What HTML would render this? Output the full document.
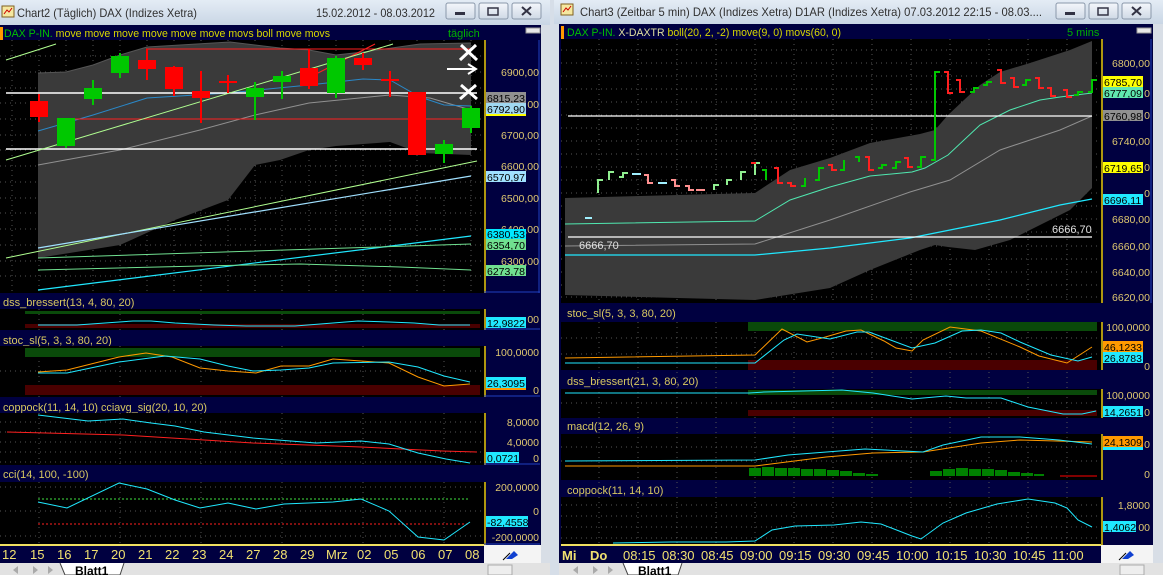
<!DOCTYPE html>
<html><head><meta charset="utf-8"><style>
html,body{margin:0;padding:0;background:#d6dee8;overflow:hidden}
svg{display:block;font-family:"Liberation Sans",sans-serif}
</style></head><body>
<svg width="1163" height="575" viewBox="0 0 1163 575" xmlns="http://www.w3.org/2000/svg">
<defs>
<linearGradient id="tb" x1="0" y1="0" x2="0" y2="1"><stop offset="0" stop-color="#e4ecf5"/><stop offset="1" stop-color="#c9d6e5"/></linearGradient>
<linearGradient id="bt" x1="0" y1="0" x2="0" y2="1"><stop offset="0" stop-color="#f4f7fb"/><stop offset="1" stop-color="#cfd9e6"/></linearGradient>
</defs>
<rect width="1163" height="575" fill="#d6dee8"/>
<!-- ================= LEFT WINDOW ================= -->
<rect x="0" y="0" width="550" height="25" fill="url(#tb)"/>
<rect x="2" y="6" width="12" height="11" fill="#f5e8a0" stroke="#806020"/><path d="M4 14 l3-4 2 2 3-4" stroke="#c00" fill="none"/>
<text x="17" y="17" font-size="12" fill="#303030" textLength="180" lengthAdjust="spacingAndGlyphs">Chart2 (Täglich)  DAX (Indizes Xetra)</text>
<text x="316" y="17" font-size="12" fill="#303030" textLength="119" lengthAdjust="spacingAndGlyphs">15.02.2012 - 08.03.2012</text>
<g stroke="#8a98aa" fill="url(#bt)"><rect x="446" y="3" width="29" height="16" rx="2"/><rect x="479" y="3" width="29" height="16" rx="2"/><rect x="512" y="3" width="29" height="16" rx="2"/></g>
<rect x="455" y="12" width="10" height="3" fill="#334"/><rect x="488" y="8" width="10" height="7" fill="none" stroke="#334" stroke-width="1.5"/>
<path d="M522 7 l9 8 M531 7 l-9 8" stroke="#334" stroke-width="2"/>
<rect x="0" y="25" width="541" height="538" fill="#000040"/>
<rect x="541" y="25" width="9" height="538" fill="#d8dee6"/>
<rect x="526" y="28" width="14" height="5" fill="#e8e8e8" stroke="#999"/>
<rect x="0" y="27" width="3" height="13" fill="#ff9900"/>
<text x="4" y="37" font-size="11" textLength="326" lengthAdjust="spacingAndGlyphs"><tspan fill="#00c000">DAX P-IN.</tspan><tspan fill="#d8d800"> move move move move move move movs boll move movs</tspan></text>
<text x="448" y="37" font-size="11" fill="#00b000">täglich</text>
<!-- main plot -->
<rect x="0" y="40" width="484" height="253" fill="#000"/>
<g stroke="#555" stroke-dasharray="1,4">
<path d="M12 40V293M39 40V293M66 40V293M93 40V293M120 40V293M147 40V293M174 40V293M201 40V293M228 40V293M255 40V293M282 40V293M309 40V293M336 40V293M363 40V293M390 40V293M417 40V293M444 40V293M471 40V293"/>
<path d="M0 56H484M0 72H484M0 88H484M0 103H484M0 119H484M0 135H484M0 150H484M0 166H484M0 182H484M0 198H484M0 213H484M0 229H484M0 245H484M0 261H484M0 276H484"/>
</g>
<polygon fill="#3a3a3a" points="38,73 66,72 93,65 120,55 147,47 230,42 280,48 309,50 336,55 363,52 420,44 471,43 471,155 420,153 390,142 336,146 309,150 280,160 255,165 228,200 175,220 120,245 38,258"/>
<polyline fill="none" stroke="#909090" points="38,165 120,150 200,130 255,115 309,103 390,95 430,98 471,110"/>
<polyline fill="none" stroke="#555" points="38,73 66,72 93,65 120,55 147,47 230,42 280,48 309,50 336,55 363,52 420,44 471,43"/>
<polyline fill="none" stroke="#2a88c8" points="38,131 93,115 147,98 228,93 309,85 363,79 390,80 420,97 444,105 471,106"/>
<path d="M6 93H477M6 149H477" stroke="#fff" stroke-width="1.5"/>
<path d="M146 49H470M66 119H470" stroke="#ff2020"/>
<path d="M318 73L375 44" stroke="#ff2020"/>
<path d="M6 160L393 44M6 258L477 161M6 60L56 44" stroke="#b0ff90"/>
<path d="M38 248L471 176" stroke="#a0e0ff" stroke-width="1.2"/>
<path d="M38 290L471 236" stroke="#20e8ff" stroke-width="1.2"/>
<path d="M38 258L471 244M38 270L200 266 300 264 400 267 471 270" stroke="#70e090" fill="none"/>
<path d="M461 45l16 15M476 45l-16 15M461 85l16 14M476 85l-16 14" stroke="#fff" stroke-width="3"/>
<path d="M447 69H476M468 64l8 5-8 5" stroke="#fff" stroke-width="2" fill="none"/>
<!-- candles -->
<g>
<g fill="#ff0000"><rect x="38" y="94" width="2" height="28"/><rect x="30" y="101" width="18" height="16"/>
<rect x="146" y="49" width="2" height="31"/><rect x="138" y="60" width="18" height="9"/>
<rect x="173" y="66" width="2" height="30"/><rect x="165" y="67" width="18" height="22"/>
<rect x="200" y="71" width="2" height="52"/><rect x="192" y="91" width="18" height="7"/>
<rect x="227" y="75" width="2" height="18"/><rect x="219" y="81" width="18" height="2"/>
<rect x="308" y="49" width="2" height="40"/><rect x="300" y="68" width="18" height="18"/>
<rect x="362" y="53" width="2" height="17"/><rect x="354" y="58" width="18" height="7"/>
<rect x="389" y="71" width="2" height="26"/><rect x="381" y="79" width="18" height="2"/>
<rect x="408" y="92" width="18" height="63"/></g>
<g fill="#00c800"><rect x="65" y="118" width="2" height="30"/><rect x="57" y="118" width="18" height="28"/>
<rect x="92" y="80" width="2" height="25"/><rect x="84" y="88" width="18" height="11"/>
<rect x="119" y="53" width="2" height="25"/><rect x="111" y="56" width="18" height="17"/>
<rect x="254" y="82" width="2" height="38"/><rect x="246" y="88" width="18" height="9"/>
<rect x="281" y="71" width="2" height="28"/><rect x="273" y="76" width="18" height="6"/>
<rect x="335" y="56" width="2" height="42"/><rect x="327" y="58" width="18" height="35"/>
<rect x="443" y="140" width="2" height="23"/><rect x="435" y="144" width="18" height="10"/>
<rect x="470" y="106" width="2" height="27"/><rect x="462" y="108" width="18" height="20"/></g>
</g>
<!-- left axis -->
<rect x="484" y="40" width="56" height="253" fill="#000040"/>
<path d="M485 40V293" stroke="#e8c800" stroke-width="1.5"/><path d="M484 292H540M539 40V293" stroke="#2040c0"/>
<g font-size="10.5" fill="#e0c870" text-anchor="end">
<text x="539" y="76">6900,00</text><text x="539" y="139">6700,00</text><text x="539" y="108">00</text><text x="539" y="170">6600,00</text><text x="539" y="202">6500,00</text><text x="539" y="233">6400,00</text><text x="539" y="265">6300,00</text></g>
<g font-size="10.5" fill="#000">
<rect x="486" y="92" width="40" height="11" fill="#909090"/><text x="487" y="102">6815,23</text>
<rect x="486" y="103" width="40" height="11" fill="#a0d8f0"/><text x="487" y="113">6792,90</text><rect x="486" y="114" width="40" height="2" fill="#ffff00"/>
<rect x="486" y="171" width="40" height="11" fill="#a0e0ff"/><text x="487" y="181">6570,97</text>
<rect x="486" y="229" width="40" height="10" fill="#00e8ff"/><text x="487" y="238">6380,53</text>
<rect x="486" y="239" width="40" height="11" fill="#70e090"/><text x="487" y="249">6354,70</text>
<rect x="486" y="265" width="40" height="11" fill="#70e090"/><text x="487" y="275">6273,78</text></g>
<!-- sub headers left -->
<g font-size="11" fill="#d8c860"><text x="3" y="306">dss_bressert(13, 4, 80, 20)</text><text x="3" y="344">stoc_sl(5, 3, 3, 80, 20)</text><text x="3" y="411" textLength="204" lengthAdjust="spacingAndGlyphs">coppock(11, 14, 10) cciavg_sig(20, 10, 20)</text><text x="3" y="478">cci(14, 100, -100)</text></g>
<g fill="#000"><rect x="0" y="309" width="484" height="21"/><rect x="0" y="346" width="484" height="51"/><rect x="0" y="413" width="484" height="52"/><rect x="0" y="482" width="484" height="63"/></g>
<g stroke="#555" stroke-dasharray="1,4"><path d="M39 309V330M120 309V330M201 309V330M282 309V330M363 309V330M444 309V330M39 346V397M120 346V397M201 346V397M282 346V397M363 346V397M444 346V397M39 413V465M120 413V465M201 413V465M282 413V465M363 413V465M444 413V465M39 482V545M120 482V545M201 482V545M282 482V545M363 482V545M444 482V545M0 371H484M0 422H484M0 432H484M0 442H484M0 452H484M0 462H484M0 511H484M0 536H484M0 487H484"/></g>
<rect x="25" y="311" width="455" height="3" fill="#0a4a0a"/><rect x="25" y="324" width="455" height="4" fill="#4a0000"/>
<rect x="25" y="348" width="455" height="9" fill="#0a4a0a"/><rect x="25" y="385" width="455" height="10" fill="#4a0000"/>
<polyline fill="none" stroke="#20e8ff" points="38,325 77,325 105,323 133,321 151,321 175,323 214,325 246,326 295,326 333,323 358,321 389,322 414,323 439,325 470,325"/>
<polyline fill="none" stroke="#ff9900" points="38,372 67,370 119,357 146,353 172,357 200,368 228,371 256,373 281,366 309,366 333,359 361,361 389,363 418,377 444,386 470,384"/>
<polyline fill="none" stroke="#20e8ff" points="38,373 67,373 119,362 165,356 200,359 228,366 253,371 281,370 309,368 333,363 389,362 418,367 444,376 470,382"/>
<polyline fill="none" stroke="#ff2020" points="7,432 123,435 253,443 361,447 442,451 477,452"/>
<polyline fill="none" stroke="#20e8ff" points="38,415 63,418 88,421 123,419 151,423 175,426 204,432 253,438 316,443 361,441 389,444 418,453 446,459 470,463"/>
<path d="M38 499H470" stroke="#40e040" stroke-dasharray="2,2"/><path d="M38 524H470" stroke="#ff2020" stroke-dasharray="2,2"/>
<polyline fill="none" stroke="#20e8ff" points="38,502 67,508 119,483 147,489 175,500 200,508 228,503 256,509 284,504 333,502 361,499 389,511 418,537 444,540 470,522"/>
<!-- sub axes left -->
<g fill="#000040"><rect x="484" y="309" width="56" height="21"/><rect x="484" y="346" width="56" height="51"/><rect x="484" y="413" width="56" height="52"/><rect x="484" y="482" width="56" height="63"/></g>
<g stroke="#e8c800" stroke-width="1.5"><path d="M485 309V330M485 346V397M485 413V465M485 482V545"/></g>
<g stroke="#2040c0"><path d="M484 329H540M484 396H540M484 464H540M484 544H540"/></g>
<g font-size="10.5" fill="#e0c870" text-anchor="end"><text x="539" y="323">00</text><text x="539" y="356">100,0000</text><text x="539" y="394">0</text><text x="539" y="426">8,0000</text><text x="539" y="446">4,0000</text><text x="539" y="462">0</text><text x="539" y="491">200,0000</text><text x="539" y="515">0</text><text x="539" y="541">-200,0000</text></g>
<g font-size="10.5" fill="#000"><rect x="486" y="317" width="40" height="11" fill="#20e8ff"/><text x="487" y="327">12,9822</text>
<rect x="486" y="377" width="40" height="11" fill="#20e8ff"/><text x="487" y="387">26,3095</text><rect x="486" y="388" width="40" height="2" fill="#ff9900"/>
<rect x="486" y="452" width="33" height="11" fill="#20e8ff"/><text x="487" y="462">0,0721</text>
<rect x="486" y="516" width="42" height="11" fill="#20e8ff"/><text x="487" y="526">-82,4558</text></g>
<!-- date axis left -->
<rect x="0" y="544" width="484" height="2" fill="#f0e060"/>
<rect x="0" y="546" width="484" height="17" fill="#000040"/>
<rect x="484" y="545" width="57" height="18" fill="#f4f4f4"/>
<path d="M506 559l8-8 4 4-6 4z" fill="#1040d0"/><path d="M503 560l7-7" stroke="#000"/>
<g font-size="13" fill="#f0e070"><text x="2" y="559">12</text><text x="30" y="559">15</text><text x="57" y="559">16</text><text x="84" y="559">17</text><text x="111" y="559">20</text><text x="138" y="559">21</text><text x="165" y="559">22</text><text x="192" y="559">23</text><text x="219" y="559">24</text><text x="246" y="559">27</text><text x="273" y="559">28</text><text x="300" y="559">29</text><text x="326" y="559">Mrz</text><text x="357" y="559">02</text><text x="384" y="559">05</text><text x="411" y="559">06</text><text x="438" y="559">07</text><text x="465" y="559">08</text></g>
<rect x="0" y="563" width="550" height="12" fill="#e2e2e2"/>
<g fill="#aaa"><path d="M4 566v9M18 566l-5 4 5 4zM33 566l5 4-5 4zM48 566l5 4-5 4zM55 566v9"/></g>
<path d="M60 563l5 12h55l4-12" fill="#fff" stroke="#444"/>
<text x="75" y="575" font-size="12" font-weight="bold" fill="#000">Blatt1</text>
<rect x="488" y="565" width="24" height="10" fill="#eee" stroke="#aaa"/>
<!-- ================= RIGHT WINDOW ================= -->
<rect x="554" y="0" width="609" height="24" fill="url(#tb)"/>
<rect x="561" y="4" width="12" height="11" fill="#f5e8a0" stroke="#806020"/><path d="M563 12 l3-4 2 2 3-4" stroke="#c00" fill="none"/>
<text x="580" y="16" font-size="12" fill="#303030" textLength="462" lengthAdjust="spacingAndGlyphs">Chart3 (Zeitbar 5 min)  DAX (Indizes Xetra) D1AR (Indizes Xetra) 07.03.2012 22:15 - 08.03....</text>
<g stroke="#8a98aa" fill="url(#bt)"><rect x="1056" y="3" width="29" height="16" rx="2"/><rect x="1089" y="3" width="29" height="16" rx="2"/><rect x="1122" y="3" width="29" height="16" rx="2"/></g>
<rect x="1065" y="12" width="10" height="3" fill="#334"/><rect x="1098" y="8" width="10" height="7" fill="none" stroke="#334" stroke-width="1.5"/>
<path d="M1132 7 l9 8 M1141 7 l-9 8" stroke="#334" stroke-width="2"/>
<rect x="559" y="24" width="594" height="539" fill="#000040"/>
<rect x="1153" y="24" width="10" height="539" fill="#d8dee6"/>
<rect x="1137" y="28" width="14" height="5" fill="#e8e8e8" stroke="#999"/>
<rect x="561" y="26" width="3" height="13" fill="#ff9900"/>
<text x="567" y="36" font-size="11" textLength="274" lengthAdjust="spacingAndGlyphs"><tspan fill="#00c000">DAX P-IN. </tspan><tspan fill="#e0e0a0">X-DAXTR </tspan><tspan fill="#d8d800">boll(20, 2, -2) move(9, 0) movs(60, 0)</tspan></text>
<text x="1067" y="36" font-size="11" fill="#00b000">5 mins</text>
<rect x="561" y="39" width="540" height="264" fill="#000"/>
<g stroke="#555" stroke-dasharray="1,4">
<path d="M599 39V303M638 39V303M677 39V303M716 39V303M755 39V303M794 39V303M833 39V303M872 39V303M911 39V303M950 39V303M989 39V303M1028 39V303M1067 39V303"/>
<path d="M561 50H1101M561 63H1101M561 76H1101M561 89H1101M561 102H1101M561 115H1101M561 128H1101M561 141H1101M561 154H1101M561 167H1101M561 180H1101M561 193H1101M561 206H1101M561 219H1101M561 232H1101M561 246H1101M561 259H1101M561 272H1101M561 285H1101M561 297H1101"/>
</g>
<polygon fill="#3a3a3a" points="565,198 755,193 790,170 830,158 870,143 920,134 935,130 948,115 980,85 1000,72 1030,63 1070,50 1092,41 1092,188 1070,210 1050,220 1010,240 975,250 948,247 935,245 920,250 870,270 830,288 755,300 565,295"/>
<polyline fill="none" stroke="#909090" points="565,246 755,244 830,220 910,192 950,180 1000,150 1060,130 1092,116"/>
<polyline fill="none" stroke="#50e8b0" points="565,224 755,221 790,200 830,187 870,176 912,172 925,168 948,155 980,125 1010,110 1040,100 1060,97 1092,93"/>
<polyline fill="none" stroke="#20e8ff" stroke-width="1.3" points="565,255 755,255 830,248 910,238 1000,220 1060,205 1092,199"/>
<path d="M568 116H1092M568 237H1092" stroke="#fff" stroke-width="1.3"/>
<text x="579" y="249" font-size="11" fill="#e0e0e0">6666,70</text><text x="1052" y="233" font-size="11" fill="#e0e0e0">6666,70</text>
<g stroke-width="2" fill="none">
<path d="M585 218h7" stroke="#a0f0ff"/>
<path stroke="#90ee90" d="M598 193V180h5M609 180V172h5M619 177h4V173h5M714 190V185h5M727 185V180h5M741 180V172h5M755 175V163h5"/>
<path stroke="#a0f0ff" d="M632 174h9M658 183h9"/>
<path stroke="#ff9090" d="M644 175h4V183h5M671 180h4V186h5M685 186h4V190h5M696 190h9"/>
<path stroke="#ff2020" d="M751 163h5M774 168h4V183h5M787 183h4V186h5M828 165h4V170h5M865 157h4V170h5M904 158h4V167h5M944 72h4V93h5M956 80h4V92h5M997 70h4V83h5M1010 78h4V87h5M1035 78h4V88h5M1047 88h4V96h5M1063 90h4V97h5"/>
<path stroke="#00c800" d="M762 170h4V180M801 186h4V178M815 180h4V168h5M840 170h4V160M855 157h4V162M878 168h4V165h5M892 168h4V162h5M917 167h4V157h5M931 160h4V72h5M970 92h4V88h5M983 85h4V82h5M1022 85h4V80h5M1074 95h4V92h5M1088 92h4V80h5"/>
</g>
<!-- right axis -->
<rect x="1101" y="39" width="51" height="264" fill="#000040"/>
<path d="M1102 39V303" stroke="#e8c800" stroke-width="1.5"/><path d="M1151 39V303" stroke="#2040c0"/>
<g font-size="10.5" fill="#e0c870" text-anchor="end"><text x="1150" y="67">6800,00</text><text x="1150" y="145">6740,00</text><text x="1150" y="223">6680,00</text><text x="1150" y="250">6660,00</text><text x="1150" y="276">6640,00</text><text x="1150" y="301">6620,00</text><text x="1150" y="97">0</text><text x="1150" y="119">0</text><text x="1150" y="171">0</text><text x="1150" y="197">0</text></g>
<g font-size="10.5" fill="#000">
<rect x="1103" y="76" width="40" height="11" fill="#ffff00"/><text x="1104" y="86">6785,70</text>
<rect x="1103" y="87" width="40" height="11" fill="#60e8b0"/><text x="1104" y="97">6777,09</text>
<rect x="1103" y="110" width="40" height="11" fill="#909090"/><text x="1104" y="120">6760,98</text>
<rect x="1103" y="162" width="40" height="11" fill="#ffff00"/><text x="1104" y="172">6719,65</text>
<rect x="1103" y="194" width="40" height="11" fill="#20e8ff"/><text x="1104" y="204">6696,11</text></g>
<!-- right sub panels -->
<g font-size="11" fill="#d8c860"><text x="567" y="317">stoc_sl(5, 3, 3, 80, 20)</text><text x="567" y="385">dss_bressert(21, 3, 80, 20)</text><text x="567" y="430">macd(12, 26, 9)</text><text x="567" y="494">coppock(11, 14, 10)</text></g>
<g fill="#000"><rect x="561" y="322" width="540" height="48"/><rect x="561" y="389" width="540" height="29"/><rect x="561" y="434" width="540" height="46"/><rect x="561" y="497" width="540" height="48"/></g>
<g stroke="#555" stroke-dasharray="1,4"><path d="M599 322V545M638 322V545M677 322V545M716 322V545M755 322V545M794 322V545M833 322V545M872 322V545M911 322V545M950 322V545M989 322V545M1028 322V545M1067 322V545"/><path d="M561 338H1101M561 354H1101M561 403H1101M561 447H1101M561 461H1101M561 505H1101M561 516H1101M561 527H1101M561 538H1101"/></g>
<rect x="748" y="322" width="349" height="9" fill="#0a4a0a"/><rect x="748" y="360" width="349" height="10" fill="#4a0000"/>
<rect x="748" y="390" width="349" height="5" fill="#0a4a0a"/><rect x="748" y="410" width="349" height="6" fill="#4a0000"/>
<polyline fill="none" stroke="#ff9900" points="565,358 755,355 782,329 807,342 822,338 846,331 861,330 884,341 896,348 912,351 923,340 950,327 981,331 1020,347 1039,356 1067,363 1092,347"/>
<polyline fill="none" stroke="#20e8ff" points="565,363 755,363 784,340 797,334 830,339 857,332 869,332 912,348 935,343 962,331 981,330 1001,333 1020,342 1051,355 1078,361 1092,357"/>
<polyline fill="none" stroke="#20e8ff" points="565,393 749,393 764,392 842,390 873,393 912,399 946,396 966,398 1001,398 1028,407 1063,414 1082,414 1096,411"/>
<g fill="#008000"><rect x="749" y="468" width="12" height="8"/><rect x="762" y="467" width="12" height="9"/><rect x="775" y="468" width="12" height="8"/><rect x="788" y="468" width="12" height="8"/><rect x="801" y="469" width="12" height="7"/><rect x="814" y="469" width="12" height="7"/><rect x="827" y="470" width="12" height="6"/><rect x="840" y="471" width="12" height="5"/><rect x="853" y="473" width="12" height="3"/><rect x="866" y="474" width="12" height="2"/>
<rect x="930" y="471" width="12" height="5"/><rect x="943" y="469" width="12" height="7"/><rect x="956" y="468" width="12" height="8"/><rect x="969" y="469" width="12" height="7"/><rect x="982" y="469" width="12" height="7"/><rect x="995" y="470" width="12" height="6"/><rect x="1008" y="472" width="12" height="4"/><rect x="1021" y="473" width="12" height="3"/><rect x="1034" y="474" width="10" height="2"/></g>
<rect x="1060" y="475" width="37" height="2" fill="#800000"/>
<polyline fill="none" stroke="#ff9900" points="565,466 755,466 826,457 873,453 923,452 981,443 1020,440 1092,442"/>
<polyline fill="none" stroke="#20e8ff" points="565,461 755,460 788,455 865,449 923,452 943,445 981,437 1020,437 1059,440 1092,444"/>
<polyline fill="none" stroke="#20e8ff" points="613,543 671,542 726,542 755,541 772,530 795,526 834,525 861,522 881,524 912,536 921,539 943,523 966,513 997,504 1028,499 1055,503 1067,508 1078,520 1092,527"/>
<g fill="#000040"><rect x="1101" y="322" width="51" height="48"/><rect x="1101" y="389" width="51" height="29"/><rect x="1101" y="434" width="51" height="46"/><rect x="1101" y="497" width="51" height="48"/></g>
<g stroke="#e8c800" stroke-width="1.5"><path d="M1102 322V370M1102 389V418M1102 434V480M1102 497V545"/></g>
<g font-size="10.5" fill="#e0c870" text-anchor="end"><text x="1150" y="331">100,0000</text><text x="1150" y="370">0</text><text x="1150" y="399">100,0000</text><text x="1150" y="416">0</text><text x="1150" y="448">0</text><text x="1150" y="478">0</text><text x="1150" y="509">1,8000</text><text x="1150" y="531">00</text></g>
<g font-size="10.5" fill="#000"><rect x="1103" y="341" width="40" height="11" fill="#ff9900"/><text x="1104" y="351">46,1233</text>
<rect x="1103" y="352" width="40" height="11" fill="#20e8ff"/><text x="1104" y="362">26,8783</text>
<rect x="1103" y="406" width="40" height="11" fill="#20e8ff"/><text x="1104" y="416">14,2651</text>
<rect x="1103" y="436" width="40" height="11" fill="#ff9900"/><text x="1104" y="446">24,1309</text><rect x="1103" y="447" width="40" height="3" fill="#20e8ff"/>
<rect x="1103" y="521" width="33" height="11" fill="#20e8ff"/><text x="1104" y="531">1,4062</text></g>
<!-- time axis right -->
<rect x="561" y="544" width="540" height="2" fill="#f0e060"/>
<rect x="561" y="546" width="540" height="17" fill="#000040"/>
<rect x="1101" y="545" width="52" height="18" fill="#f4f4f4"/>
<path d="M1122 559l8-8 4 4-6 4z" fill="#1040d0"/><path d="M1119 560l7-7" stroke="#000"/>
<g font-size="13" fill="#f0e070"><text x="562" y="560" font-weight="bold">Mi</text><text x="590" y="560" font-weight="bold">Do</text><text x="623" y="560">08:15</text><text x="662" y="560">08:30</text><text x="701" y="560">08:45</text><text x="740" y="560">09:00</text><text x="779" y="560">09:15</text><text x="818" y="560">09:30</text><text x="857" y="560">09:45</text><text x="896" y="560">10:00</text><text x="935" y="560">10:15</text><text x="974" y="560">10:30</text><text x="1013" y="560">10:45</text><text x="1052" y="560">11:00</text></g>
<rect x="559" y="563" width="604" height="12" fill="#e2e2e2"/>
<g fill="#aaa"><path d="M563 566v9M578 566l-5 4 5 4zM593 566l5 4-5 4zM608 566l5 4-5 4zM615 566v9"/></g>
<path d="M623 563l5 12h50l4-12" fill="#fff" stroke="#444"/>
<text x="638" y="575" font-size="12" font-weight="bold" fill="#000">Blatt1</text>
<rect x="1120" y="565" width="24" height="10" fill="#eee" stroke="#aaa"/>
</svg>
</body></html>
